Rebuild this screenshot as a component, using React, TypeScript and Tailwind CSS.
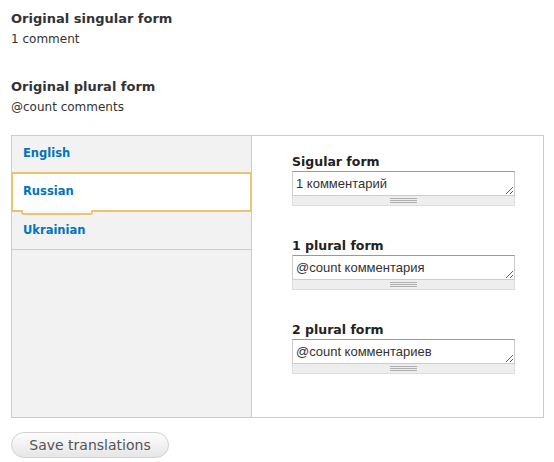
import React from "react"

const sans = { fontFamily: '"DejaVu Sans", Verdana, sans-serif' }

const forms = [
  { label: "Sigular form", value: "1 комментарий" },
  { label: "1 plural form", value: "@count комментария" },
  { label: "2 plural form", value: "@count комментариев" },
]

function Grippie() {
  return (
    <div className="h-[10px] border border-t-0 border-[#dddddd] bg-[#eeeeee] flex flex-col items-center pt-[2px] gap-[1px]">
      <div className="w-[27px] h-px bg-[#b0b0b0]" />
      <div className="w-[27px] h-px bg-[#b0b0b0]" />
      <div className="w-[27px] h-px bg-[#b0b0b0]" />
    </div>
  )
}

export default function App() {
  return (
    <div className="w-[554px] h-[462px] bg-white text-[#333333] pt-[10px] pl-[11px]" style={sans}>
      {/* Source strings */}
      <div className="font-bold text-[13px] leading-[18px]">Original singular form</div>
      <div className="text-[12px] leading-[18px] mt-[2px]">1 comment</div>
      <div className="font-bold text-[13px] leading-[18px] mt-[30px]">Original plural form</div>
      <div className="text-[12px] leading-[18px] mt-[2px]">@count comments</div>

      {/* Vertical tabs */}
      <div className="mt-[19px] w-[533px] h-[283px] border border-[#cccccc] flex">
        <div className="w-[240px] shrink-0 bg-[#f2f2f2] border-r border-[#cccccc]">
          <div className="h-[37px] border-b border-[#cccccc] flex items-center pl-[11px] text-[11.5px] font-bold text-[#0074bd]">
            English
          </div>
          <div className="relative -mx-px -mt-px h-[40px] bg-white border-2 border-[#ebc472] flex items-center pl-[10px] text-[11.5px] font-bold text-[#0074bd]">
            Russian
            <div className="absolute top-full left-[8px] w-[72px] h-[5px] border-2 border-t-0 border-[#ebc472] rounded-b-[3px] bg-[#f7f7f7]" />
          </div>
          <div className="h-[38px] border-b border-[#cccccc] flex items-center pl-[11px] pt-[1px] text-[11.5px] font-bold text-[#0074bd]">
            Ukrainian
          </div>
        </div>

        <div className="flex-1 pl-[40px] pr-[28px] pt-[16px] flex flex-col gap-[30px]">
          {forms.map((f) => (
            <div key={f.label} className="w-[223px]">
              <div className="font-bold text-[12.5px] leading-[18px] mb-[1px] pt-px text-[#222222]">{f.label}</div>
              <textarea
                readOnly
                defaultValue={f.value}
                className="block w-full h-[25px] -mt-px border border-[#cccccc] border-t-[#999999] px-[3px] pt-[4px] text-[13px] leading-[15px] text-[#333333] overflow-hidden resize-y outline-none"
                style={{ fontFamily: '"Liberation Sans", Arial, sans-serif' }}
              />
              <Grippie />
            </div>
          ))}
        </div>
      </div>

      <button className="mt-[14px] w-[158px] h-[26px] rounded-full border border-[#d2d2d2] bg-gradient-to-b from-[#fdfdfd] to-[#e6e6e6] text-[14px] text-[#555555] leading-none">
        Save translations
      </button>
    </div>
  )
}
